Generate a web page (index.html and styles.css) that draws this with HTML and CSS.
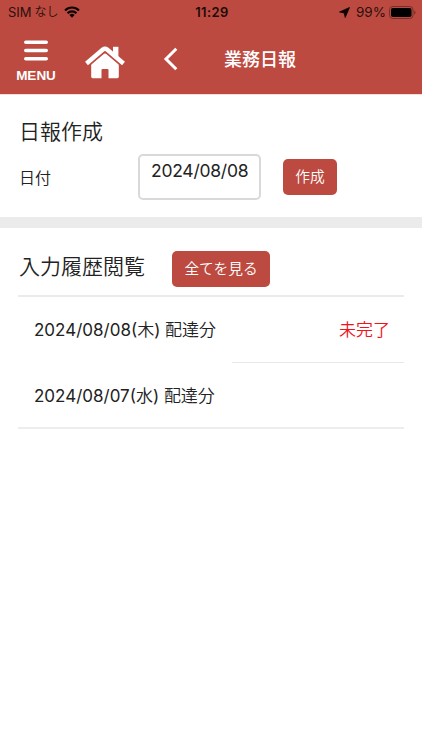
FILE: index.html
```html
<!DOCTYPE html>
<html lang="ja">
<head>
<meta charset="utf-8">
<title>業務日報</title>
<meta name="viewport" content="width=device-width,initial-scale=1">
<link rel="stylesheet" href="styles.css">
</head>
<body>

<header class="header">
  <div class="status">
    <div class="status-left">
      <span class="carrier">SIM</span><span class="carrier-ja">なし</span>
      <svg class="wifi" viewBox="0 0 16 12" width="16" height="12">
        <path d="M1 4.4a10 10 0 0 1 14 0M3.5 7.2a6.4 6.4 0 0 1 9 0" fill="none" stroke="#0c0404" stroke-width="2.1"/>
        <path d="M8 11.7 5.4 9.1a3.7 3.7 0 0 1 5.2 0z" fill="#0c0404"/>
      </svg>
    </div>
    <div class="clock">11:29</div>
    <div class="status-right">
      <svg class="location" viewBox="0 0 11 11" width="11" height="11"><path d="M10.5.5 6.2 10.5 5.2 6 .5 5z" fill="#0c0404" stroke="#0c0404" stroke-width=".8"/></svg>
      <span class="percent">99%</span>
      <svg class="battery" viewBox="0 0 27 13" width="27" height="13">
        <rect x=".5" y=".5" width="23.5" height="12" rx="3.3" fill="none" stroke="#743029"/>
        <rect x="2" y="2" width="20.5" height="9" rx="1.8" fill="#000"/>
        <path d="M25.2 4.3a2.5 2.5 0 0 1 0 4.4z" fill="#743029"/>
      </svg>
    </div>
  </div>
  <nav class="nav">
    <a class="menu">
      <svg viewBox="0 0 24 22" width="24" height="22"><path d="M1.8 2.3h20.4M1.8 10.5h20.4M1.8 18.7h20.4" stroke="#fff" stroke-width="3.6" stroke-linecap="round"/></svg>
      <span>MENU</span>
    </a>
    <a class="home">
      <svg viewBox="0 0 42 34" width="42" height="34" fill="#fff">
        <path d="M29 1.8h5.4v12H29z"/>
        <path d="M7.2 18.6 21 7l13.8 11.6v13.2q0 1.4-1.4 1.4h-8.9V25q0-1-1-1h-5q-1 0-1 1v8.2H8.6q-1.4 0-1.4-1.4z"/>
        <path d="M3.5 21.5 19.4 8q1.6-1.3 3.2 0l15.9 13.5" fill="none" stroke="#bd4a40" stroke-width="2"/>
        <path d="M2.5 18.5 18.9 4.5q2.1-1.7 4.2 0l16.4 14" fill="none" stroke="#fff" stroke-width="4.4"/>
      </svg>
    </a>
    <a class="back">
      <svg viewBox="0 0 16 24" width="16" height="24"><path d="M13.3 1.7 3 12l10.3 10.3" fill="none" stroke="#fff" stroke-width="3"/></svg>
    </a>
    <h1 class="title">業務日報</h1>
  </nav>
</header>

<section class="create">
  <h2>日報作成</h2>
  <div class="form-row">
    <label for="date">日付</label>
    <div class="date-input" id="date">2024/08/08</div>
    <button class="btn">作成</button>
  </div>
</section>

<section class="history">
  <div class="history-head">
    <h2>入力履歴閲覧</h2>
    <button class="btn btn-all">全てを見る</button>
  </div>
  <ul class="list">
    <li><span class="date"><b>2024/08/08(</b>木<b>)</b> 配達分</span><span class="pending">未完了</span></li>
    <li><span class="date"><b>2024/08/07(</b>水<b>)</b> 配達分</span></li>
  </ul>
</section>

</body>
</html>
```
FILE: styles.css
```css
:root{--red:#bd4a40;--fg:#222;--line:#e8e8e8}
*{box-sizing:border-box}
body{margin:0;background:#fff;color:var(--fg);
     font-family:Inter,"Noto Sans CJK JP",sans-serif;font-weight:350}
h1,h2{margin:0;font-weight:350}
svg{display:block;flex:none}

.header{height:94px;background:var(--red);color:#fff}
.status{display:grid;grid-template-columns:1fr auto 1fr;align-items:center;
        height:24px;padding:0 6px 0 8px;color:#2b100d;font-size:13px;line-height:24px}
.status-left,.status-right{display:flex;align-items:center}
.status-right{justify-content:flex-end}
.carrier{font-weight:400}
.carrier-ja{margin-left:3px;font-size:12px}
.wifi{margin-left:5px}
.clock{font-weight:600;letter-spacing:.4px;color:#1c0a08}
.location{margin-right:6px}
.percent{font-weight:400;font-size:13.5px}
.battery{margin-left:3px}

.nav{display:flex;align-items:flex-start;height:70px}
.menu{display:flex;flex-direction:column;align-items:center;width:40px;margin:16px 0 0 16px;
      font:bold 13.5px/16px "Liberation Sans",sans-serif}
.menu span{margin-top:6px}
.home{margin:21px 0 0 28px}
.back{margin:23px 0 0 37px}
.title{margin:23px 0 0 45px;font-size:18px;line-height:26px;font-weight:500}

.create{height:134px;padding:22px 18px 0;border-top:1px solid #f3dcda;border-bottom:11px solid #ebebeb}
.create h2,.create label{padding-left:1px}
h2{font-size:21px;line-height:30px}
.form-row{display:flex;align-items:center;margin-top:7px}
.form-row label{width:120px;font-size:16px}
.date-input{width:123px;height:46px;padding:3px 0 0 11px;border:2px solid #d9d9d9;border-radius:5px;
            font-size:17.5px;line-height:24px;font-weight:400;letter-spacing:-.25px}
.btn{width:54px;height:36px;margin-left:22px;padding:0 0 2px;border:0;border-radius:5px;
     background:var(--red);color:#fff;font:350 14.7px/34px "Noto Sans CJK JP",sans-serif}

.history{padding:23px 18px 0}
.history-head{display:flex;align-items:flex-start;height:44px}
.history-head h2{width:132px;margin-top:1px;padding-left:1px}
.btn-all{width:98px;margin-left:22px}
.list{margin:0;padding:0;border-top:2px solid #ebebeb;border-bottom:2px solid #ededed;list-style:none}
.list li{display:flex;align-items:center;height:65px;padding:0 14px 0 16px;font-size:17px}
.list li:first-child{padding-bottom:2px}
.list li + li{position:relative}
.list li + li::before{content:"";position:absolute;top:0;left:214px;right:0;height:1px;background:var(--line)}
.date b{font-weight:400}
.pending{margin-left:auto;color:#f1131c}
```
